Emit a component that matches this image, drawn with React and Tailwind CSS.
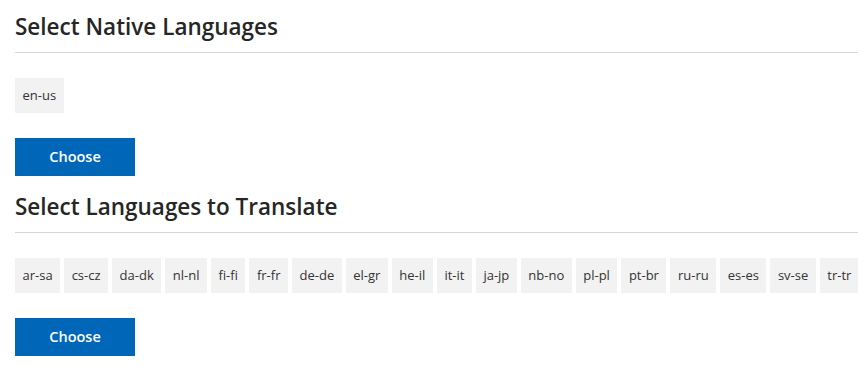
import React from "react";

const natives = ["en-us"];
const targets = ["ar-sa","cs-cz","da-dk","nl-nl","fi-fi","fr-fr","de-de","el-gr","he-il","it-it","ja-jp","nb-no","pl-pl","pt-br","ru-ru","es-es","sv-se","tr-tr"];

function Section({ title, items, top }) {
  return (
    <div className={top}>
      <h2 className="text-[22.5px] font-semibold leading-[30px] text-[#262626] pb-[10px] border-b border-[#d6d6d6]">{title}</h2>
      <div className="flex flex-nowrap gap-[4px] mt-[25px]">
        {items.map((l) => (
          <span key={l} className="shrink-0 bg-[#f2f2f2] h-[35px] px-[7.5px] flex items-center text-[13px] text-[#333]">{l}</span>
        ))}
      </div>
      <button className="mt-[25px] w-[120px] h-[38px] bg-[#0067b8] text-white text-[14.5px] font-semibold">Choose</button>
    </div>
  );
}

export default function App() {
  return (
    <div className="w-[858px] h-[366px] overflow-hidden bg-white pl-[15px]" style={{ fontFamily: '"Open Sans", sans-serif' }}>
      <div className="w-[900px]">
        <Section title="Select Native Languages" items={natives} top="pt-[12px]" />
        <Section title="Select Languages to Translate" items={targets} top="pt-[16px]" />
      </div>
    </div>
  );
}
